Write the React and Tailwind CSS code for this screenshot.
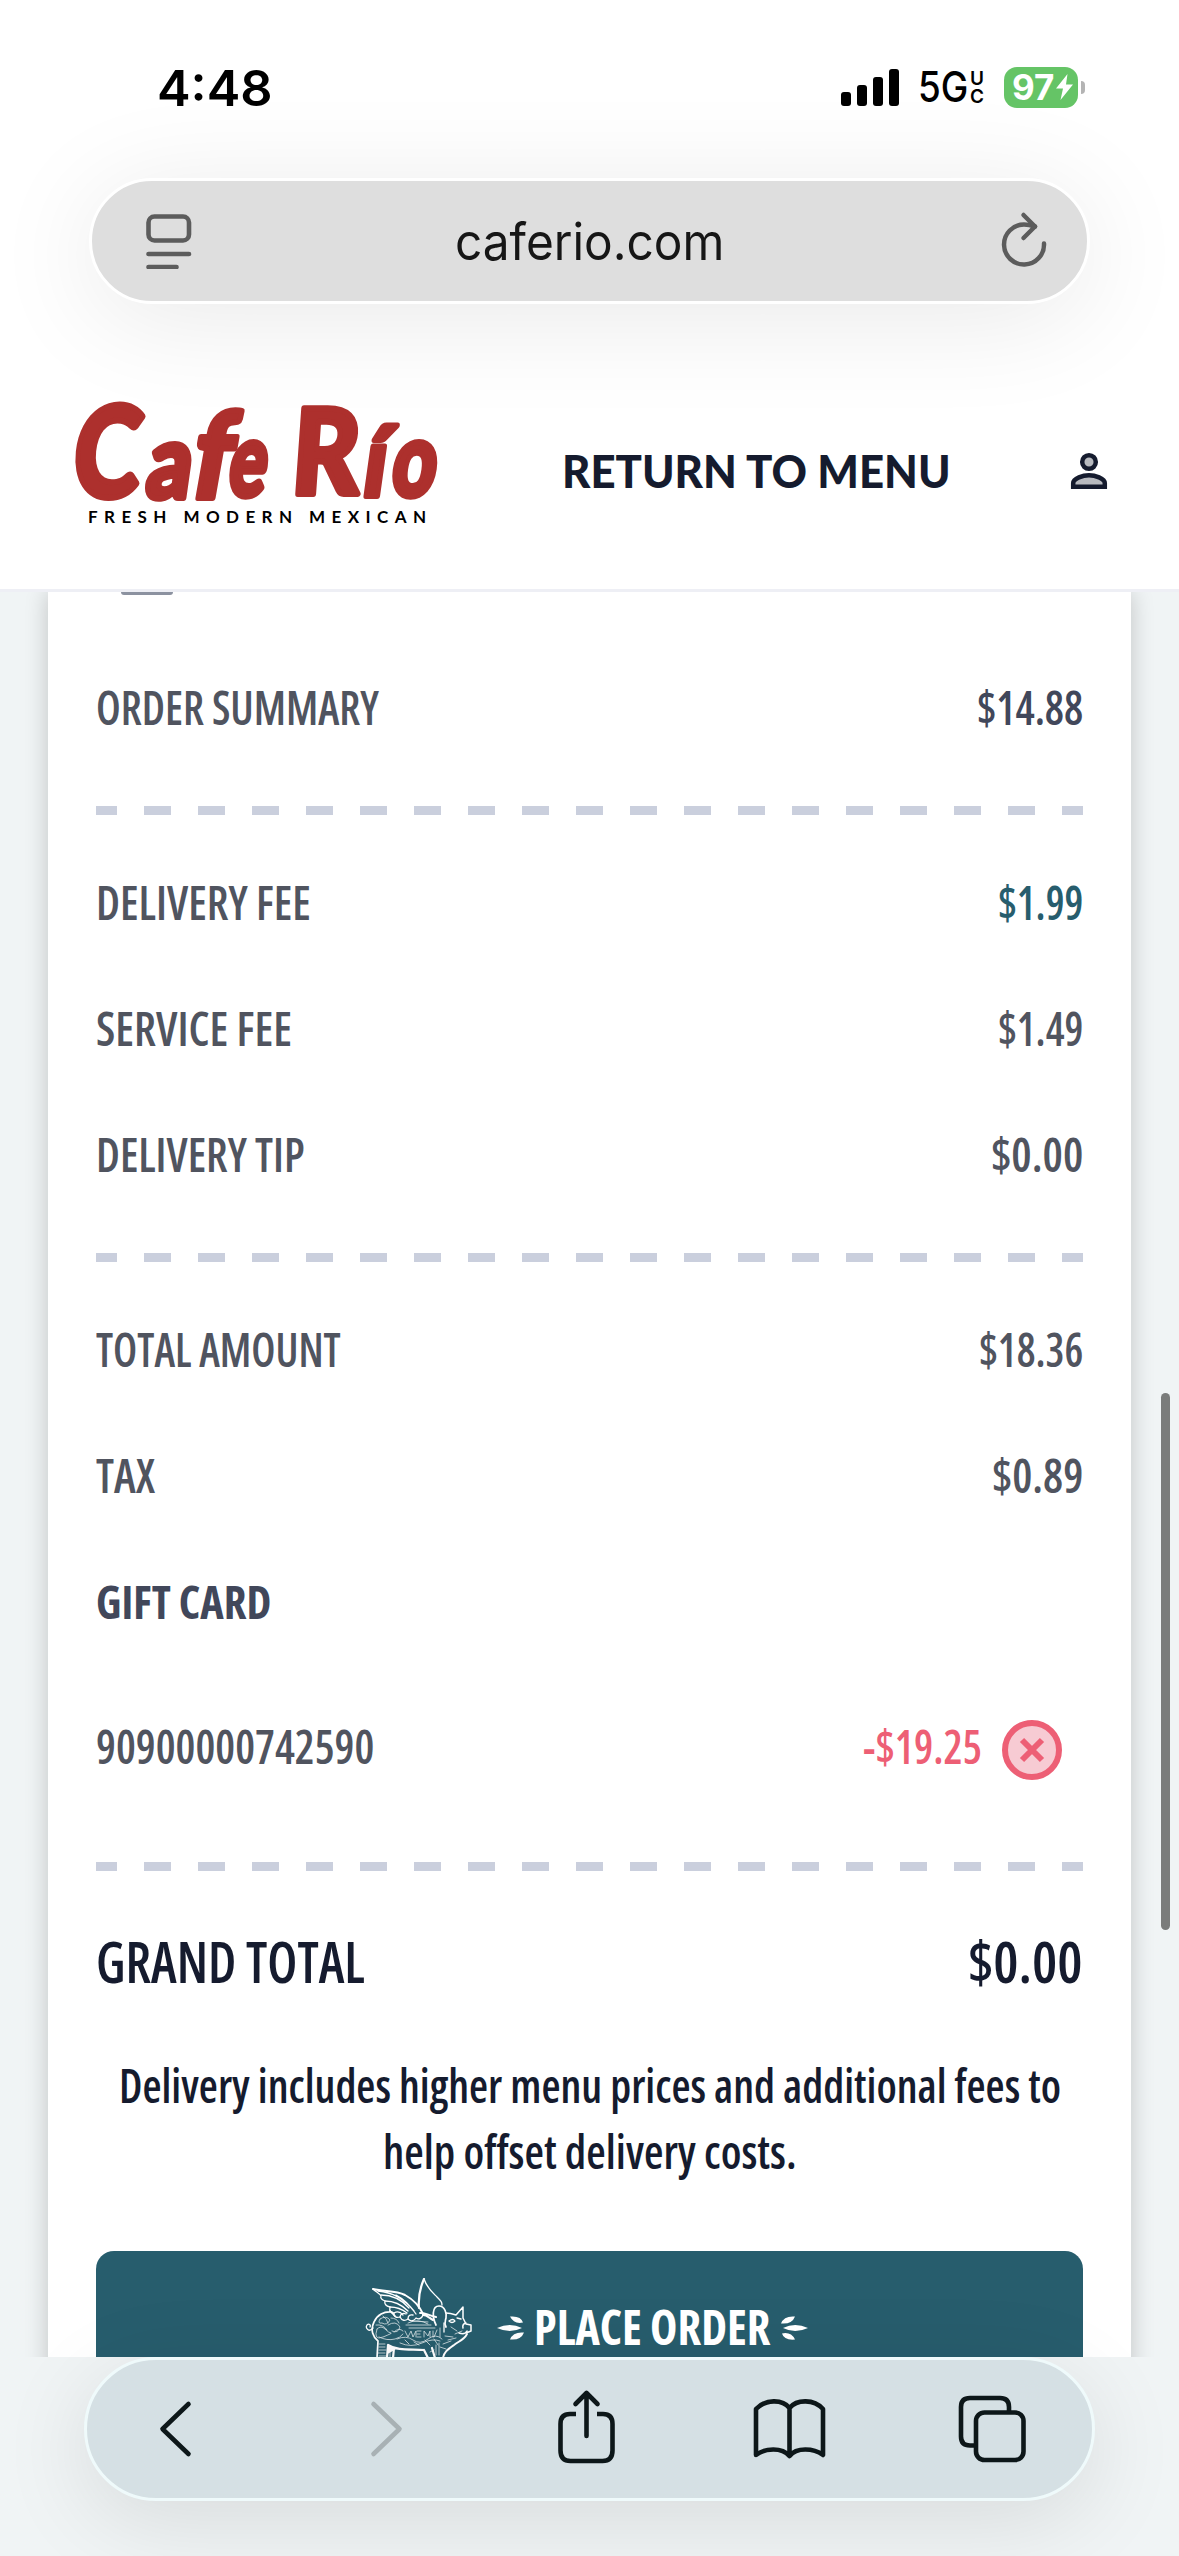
import React, { useLayoutEffect, useRef, useState } from 'react';

// squeezes one line of text into a given width, used for the condensed menu lettering
function FitText({ width, className = '', children }) {
  const ref = useRef(null);
  const [scale, setScale] = useState(1);

  useLayoutEffect(() => {
    setScale(width / ref.current.offsetWidth);
  }, [width, children]);

  return (
    <span className={`block shrink-0 leading-none ${className}`} style={{ width }}>
      <span
        ref={ref}
        className="inline-block origin-left whitespace-nowrap leading-none"
        style={{ transform: `scaleX(${scale})` }}
      >
        {children}
      </span>
    </span>
  );
}

const condensed = "font-['Open_Sans','Noto_Sans',sans-serif] [font-stretch:75%]";

const fees = [
  { label: 'DELIVERY FEE', labelWidth: 215, value: '$1.99', valueWidth: 85, color: 'text-[#275d6d]' },
  { label: 'SERVICE FEE', labelWidth: 196, value: '$1.49', valueWidth: 85, color: 'text-[#50545f]' },
  { label: 'DELIVERY TIP', labelWidth: 209, value: '$0.00', valueWidth: 92, color: 'text-[#50545f]' },
];

const totals = [
  { label: 'TOTAL AMOUNT', labelWidth: 245, value: '$18.36', valueWidth: 104, color: 'text-[#50545f]' },
  { label: 'TAX', labelWidth: 59, value: '$0.89', valueWidth: 91, color: 'text-[#50545f]' },
];

function Row({ label, labelWidth, value, valueWidth, color }) {
  return (
    <div className="flex h-[126px] items-center justify-between pb-px text-[47px] font-[550] text-[#50545f]">
      <FitText width={labelWidth}>{label}</FitText>
      <FitText width={valueWidth} className={color}>{value}</FitText>
    </div>
  );
}

function Dashes({ className }) {
  return (
    <div
      className={`h-[9px] bg-[linear-gradient(90deg,#cacfdd_27px,transparent_27px)] bg-[length:54px_9px] bg-[position:-6px_0] bg-repeat-x ${className}`}
    />
  );
}

function StatusBar() {
  return (
    <div className="flex h-[178px] items-start justify-between pt-[63px] pr-[94px] pl-[157px] font-['Inter',sans-serif] text-black">
      <FitText width={116} className="text-[50px] font-semibold">4:48</FitText>
      <div className="flex h-[48px] items-center">
        <svg width="60" height="48" viewBox="0 0 60 48">
          <rect x="0" y="29" width="10" height="14" rx="3" />
          <rect x="16" y="22" width="10" height="21" rx="3" />
          <rect x="32" y="14" width="10" height="29" rx="3" />
          <rect x="48" y="6" width="10" height="37" rx="3" />
        </svg>
        <FitText width={50} className="ml-[17px] text-[42px] font-medium">5G</FitText>
        <div className="ml-px flex w-[16px] flex-col items-center gap-px text-[19px] leading-[17px] font-semibold">
          <span>U</span>
          <span>C</span>
        </div>
        <div className="ml-[19px] flex h-[41px] w-[74px] items-center rounded-[13px] bg-[#65c466] pl-[8px] text-white">
          <FitText width={42} className="text-[35px] font-bold">97</FitText>
          <svg className="ml-[1px]" width="19" height="26" viewBox="0 0 19 26" fill="currentColor">
            <path d="M12.5 0 1 14.5h7L5.500 26 18 10.500h-7z" />
          </svg>
        </div>
        <div className="ml-[3px] h-[13px] w-[4px] rounded-r-full bg-[#b4b4b4]" />
      </div>
    </div>
  );
}

function AddressBar() {
  return (
    <div className="mx-[89px] flex h-[126px] items-center justify-between rounded-full border-[3px] border-white bg-[#dedede] pr-[40px] pl-[54px] shadow-[0_14px_110px_rgba(0,0,0,0.09)]">
      <svg width="46" height="56" viewBox="0 0 46 56" fill="none" stroke="#5c5c5c" strokeWidth="4.600">
        <rect x="2.500" y="3.500" width="40.500" height="24" rx="6" />
        <path d="M2.500 41h40.500M2.500 54h28" strokeLinecap="round" />
      </svg>
      <FitText width={269} className="mr-[14px] font-['Inter',sans-serif] text-[51px] text-[#161616]">caferio.com</FitText>
      <svg width="46" height="60" viewBox="0 0 46 60" fill="none" stroke="#5c5c5c" strokeWidth="4.500" strokeLinecap="round" strokeLinejoin="round">
        <path d="M43 32.500A20 20 0 1 1 23 13.500q5 0 11 2" />
        <path d="M22.500 4 34 15.500 22.500 27" />
      </svg>
    </div>
  );
}

function CafeRioLogo() {
  return (
    <svg width="364" height="124" viewBox="0 0 364 124" className="block overflow-visible">
      <g
        fill="#ad302d"
        stroke="#ad302d"
        strokeWidth="6"
        strokeLinejoin="round"
        fontFamily="Lato, sans-serif"
        fontWeight="900"
      >
        <text transform="translate(-5 96) skewX(-6) scale(0.8 1)" fontSize="126">C</text>
        <text transform="translate(69 97) skewX(-8) scale(0.84 1)" fontSize="103">a</text>
        <text transform="translate(113 97) skewX(-10) scale(0.9 1)" fontSize="119">f</text>
        <text transform="translate(151 95) skewX(-8) scale(0.68 1)" fontSize="103">e</text>
        <text transform="translate(215 93) skewX(-4) scale(0.88 1)" fontSize="118">R</text>
        <text transform="translate(286 95) skewX(-8) scale(0.86 1)" fontSize="96">í</text>
        <text transform="translate(314 95) skewX(-8) scale(0.74 1)" fontSize="103">o</text>
      </g>
      <text x="13" y="121.500" fontFamily="Lato, sans-serif" fontWeight="700" fontSize="17" textLength="338">
        FRESH MODERN MEXICAN
      </text>
    </svg>
  );
}

function SiteHeader() {
  return (
    <div className="flex h-[285px] items-start justify-between pt-[97px] pr-[68px] pl-[75px]">
      <CafeRioLogo />
      <div className="flex h-[140px] items-center">
        <FitText width={389} className="mr-[118px] font-['Lato',sans-serif] text-[45px] font-black text-[#151b2e]">
          RETURN TO MENU
        </FitText>
        <svg width="42" height="42" viewBox="0 0 42 42" fill="#b8babf" stroke="#151b2e" strokeWidth="4.500">
          <circle cx="20" cy="12" r="6.800" />
          <path d="M4.200 36.700v-3.500c0-5 10-8 15.800-8s15.800 3 15.800 8v3.500z" />
        </svg>
      </div>
    </div>
  );
}

// winged pig on the order button
function FlyingPig() {
  return (
    <svg width="108" height="80" viewBox="-1 -1 108 80" fill="none" stroke="white" strokeWidth="1.300" strokeLinecap="round" strokeLinejoin="round">
      <path d="M7 10c12 3 22 1 32 6 9 5 15 12 18 19" strokeWidth="2" />
      <path d="M7 10c3 3 6 4 8 7-1 2 1 4 4 5-1 3 1 5 5 6-1 4 1 6 4 6-1 4 3 5 6 4 2 4 5 4 8 2 3 3 6 2 8-1 3 2 6 0 7-3" />
      <path d="M15 16c10 0 20 4 28 13M19 22c8 0 16 3 23 10M24 28c6 0 12 2 17 6M12 12c12 1 24 5 36 20M28 34q5-3 9 2M34 38q1-5 6-3M42 40q0-5 5-4M30 16c8 4 14 10 20 19" />
      <path d="M58 0c-4 9-6 18-5 29" strokeWidth="2.200" />
      <path d="M58 0c3 9 8 13 13 18 4 4 5 5 5 8" />
      <path d="M26 33c-8-1-15 3-18 10-4 8-1 15 4 19l-1 17M24 32c2 2 3 3 5 5" strokeWidth="1.700" />
      <path d="M7 49c-4 5-8 0-6-3 2-2 4 0 3 2" />
      <path d="M54 34c5-1 9 3 16 4M57 36c4 0 6 3 10 5" strokeWidth="2" />
      <path d="M70 46c-4-8-4-19 3-19 6 0 8 8 7 12-1 4-2 5 0 9" strokeWidth="1.700" />
      <path d="M80 34c4 0 7 1 10 2l7-8v11l3 6 5 1v6l-5 2M101 52q-2 4-8 2M97 49q-1-4 3-5" strokeWidth="1.500" />
      <path d="M101 55c-3 6-8 7-13 11-7 5-10 7-11 13" strokeWidth="1.900" />
      <path d="M83 42q4-3 6 0-3 3-6 0M91 39l4 1M78 44v9" />
      <path d="M22 66c9 6 23 4 36 5M22 66l-1 13M28 69l-1 10M58 71l4 8M66 69l3 10" strokeWidth="2.200" />
      <path d="M22 66l7 4-7 4z" fill="white" />
      <g strokeWidth=".8" opacity=".85">
        <path d="M14 40q6-4 10 1-3 6-8 3-5 1-2-4M11 50q4-4 8 0t6 4-8 4-6-8M22 46q8-5 12 2-2 7-8 4M28 53q5-5 9-1M13 58q8 4 16 2 5-1 8-5M17 37q4 3 5 7M10 46q7-1 11 5M25 39q6 0 8 5" />
        <path d="M40 46h25M42 44q10-5 20 1M43 49h26M46 42l16 1M39 52l3 6 3-6 2 6 3-6v6M51 52h4M51 55h3M51 58h4M58 58v-6l4 5 2-5v6M67 52v6M71 51l-3 7M74 49v9" />
        <path d="M31 60q9-4 16 1t15-1 14 0M34 64q11 5 22 0t18-2M39 61l4 4M48 63l5 3M59 61l5 5M68 60l4 6M79 57l8 1M82 61l8-2M77 65l8-3M74 68l6 2M85 48l6 4M89 55l7-3" />
        <path d="M13 65h6M13 68h6M13 71h7M12 74h7M13 77h7M24 73v6M64 73l4-2M70 66v10M73 64v12" />
      </g>
    </svg>
  );
}

function Burst({ className = '' }) {
  return (
    <svg className={className} width="28" height="26" viewBox="0 0 28 26" fill="white">
      <path d="M0 13q13-6 25 0-12 6-25 0zM13 1.500q11-1 13 6-9 2-13-6zM13 24.500q3-8 14-7-3 8-14 7z" />
    </svg>
  );
}

function OrderCard() {
  return (
    <div className={`mx-[48px] h-[1800px] bg-white px-[48px] shadow-[0_0_22px_rgba(0,0,0,0.2)] ${condensed}`}>
      <div className="h-[53px]">
        <div className="ml-[25px] h-[3px] w-[52px] rounded-b-[4px] bg-[#8c92a0]" />
      </div>
      <Row label="ORDER SUMMARY" labelWidth={283} value="$14.88" valueWidth={106} color="text-[#41475a]" />
      <Dashes className="mt-[35px] mb-[25px]" />
      {fees.map((row) => (
        <Row key={row.label} {...row} />
      ))}
      <Dashes className="mt-[35px] mb-[25px]" />
      {totals.map((row) => (
        <Row key={row.label} {...row} />
      ))}
      <div className="flex h-[126px] items-center pb-[2px] text-[47px] font-bold text-[#41475a]">
        <FitText width={175}>GIFT CARD</FitText>
      </div>
      <div className="flex h-[164px] items-center text-[47px] font-[550] text-[#50545f]">
        <FitText width={278} className="pb-[2px]">90900000742590</FitText>
        <FitText width={119} className="ml-auto pb-[2px] text-[#ed5f75]">-$19.25</FitText>
        <button className="mt-[6px] mr-[21px] ml-[20px]">
          <svg width="60" height="60" viewBox="0 0 60 60" stroke="#ed5f75" strokeWidth="6">
            <circle cx="30" cy="30" r="27" fill="#f7cbd3" />
            <path d="m20 20 20 20M40 20 20 40" />
          </svg>
        </button>
      </div>
      <Dashes className="my-[33px]" />
      <div className="flex h-[114px] items-center justify-between pb-px text-[58px] font-[550] text-[#151b2e]">
        <FitText width={269}>GRAND TOTAL</FitText>
        <FitText width={115}>$0.00</FitText>
      </div>
      <div className="mt-[35px] text-[47px] font-[550] text-[#151b2e]">
        <div className="flex h-[66px] items-center justify-center pb-[2px]">
          <FitText width={942}>Delivery includes higher menu prices and additional fees to</FitText>
        </div>
        <div className="flex h-[66px] items-center justify-center pb-[2px]">
          <FitText width={414}>help offset delivery costs.</FitText>
        </div>
      </div>
      <button className="mt-[66px] flex h-[150px] w-full items-start rounded-[18px] bg-[#275d6d] text-[48px] font-bold text-white">
        <div className="flex pt-[27px] pl-[269px]">
          <FlyingPig />
        </div>
        <div className="mt-[51px] ml-[24px] flex h-[52px] items-center">
          <Burst />
          <FitText width={236} className="mr-[10px] ml-[9px] pb-[2px]">PLACE ORDER</FitText>
          <Burst className="rotate-180" />
        </div>
      </button>
    </div>
  );
}

function Toolbar() {
  return (
    <div className="h-[199px] bg-[#f0f4f5]">
      <div className="mx-[84px] flex h-[144px] items-center rounded-full border-[3px] border-[#effafb] bg-[#d5e0e4] shadow-[0_20px_90px_rgba(0,0,0,0.1)]">
        <svg width="1005" height="138" viewBox="87 2360 1005 138" fill="none" stroke="#0d1719" strokeWidth="4.600" strokeLinecap="round" strokeLinejoin="round">
          <path d="M188.500 2404 162.500 2429l26 25" />
          <path d="M373.500 2404l26 25-26 25" stroke="#a8b1b4" />
          <path d="M576 2414h-6q-9.500 0-9.500 10v26.500q0 10.500 10 10.500h32q10 0 10-10.500V2424q0-10-9.500-10h-6" strokeLinecap="butt" />
          <path d="M586.500 2436v-42M575.500 2404l11-11 11 11" />
          <path d="M789.500 2456v-48c-7-9-24-9-33.500 1v46c9-7 26-8 33.500 1 7-9 24-8 33.500-1v-46c-9-10-26-10-33.500-1" />
          <path d="M974 2445.500h-4q-9 0-9-9V2407q0-9 9-9h30q9 0 9 9v4.500" strokeLinecap="butt" />
          <rect x="976" y="2412.500" width="47.500" height="47.500" rx="8.500" />
        </svg>
      </div>
    </div>
  );
}

export default function App() {
  return (
    <div className="relative flex h-[2556px] w-[1179px] flex-col overflow-hidden bg-[#f0f4f5]">
      <header className="h-[592px] shrink-0 overflow-hidden border-b-[3px] border-[#eeeff5] bg-white">
        <StatusBar />
        <AddressBar />
        <SiteHeader />
      </header>
      <main className="h-[1765px] shrink-0 overflow-hidden">
        <OrderCard />
      </main>
      <Toolbar />
      <div className="absolute top-[1393px] right-[9px] h-[537px] w-[9px] rounded-full bg-[#7a7c7b]" />
    </div>
  );
}
